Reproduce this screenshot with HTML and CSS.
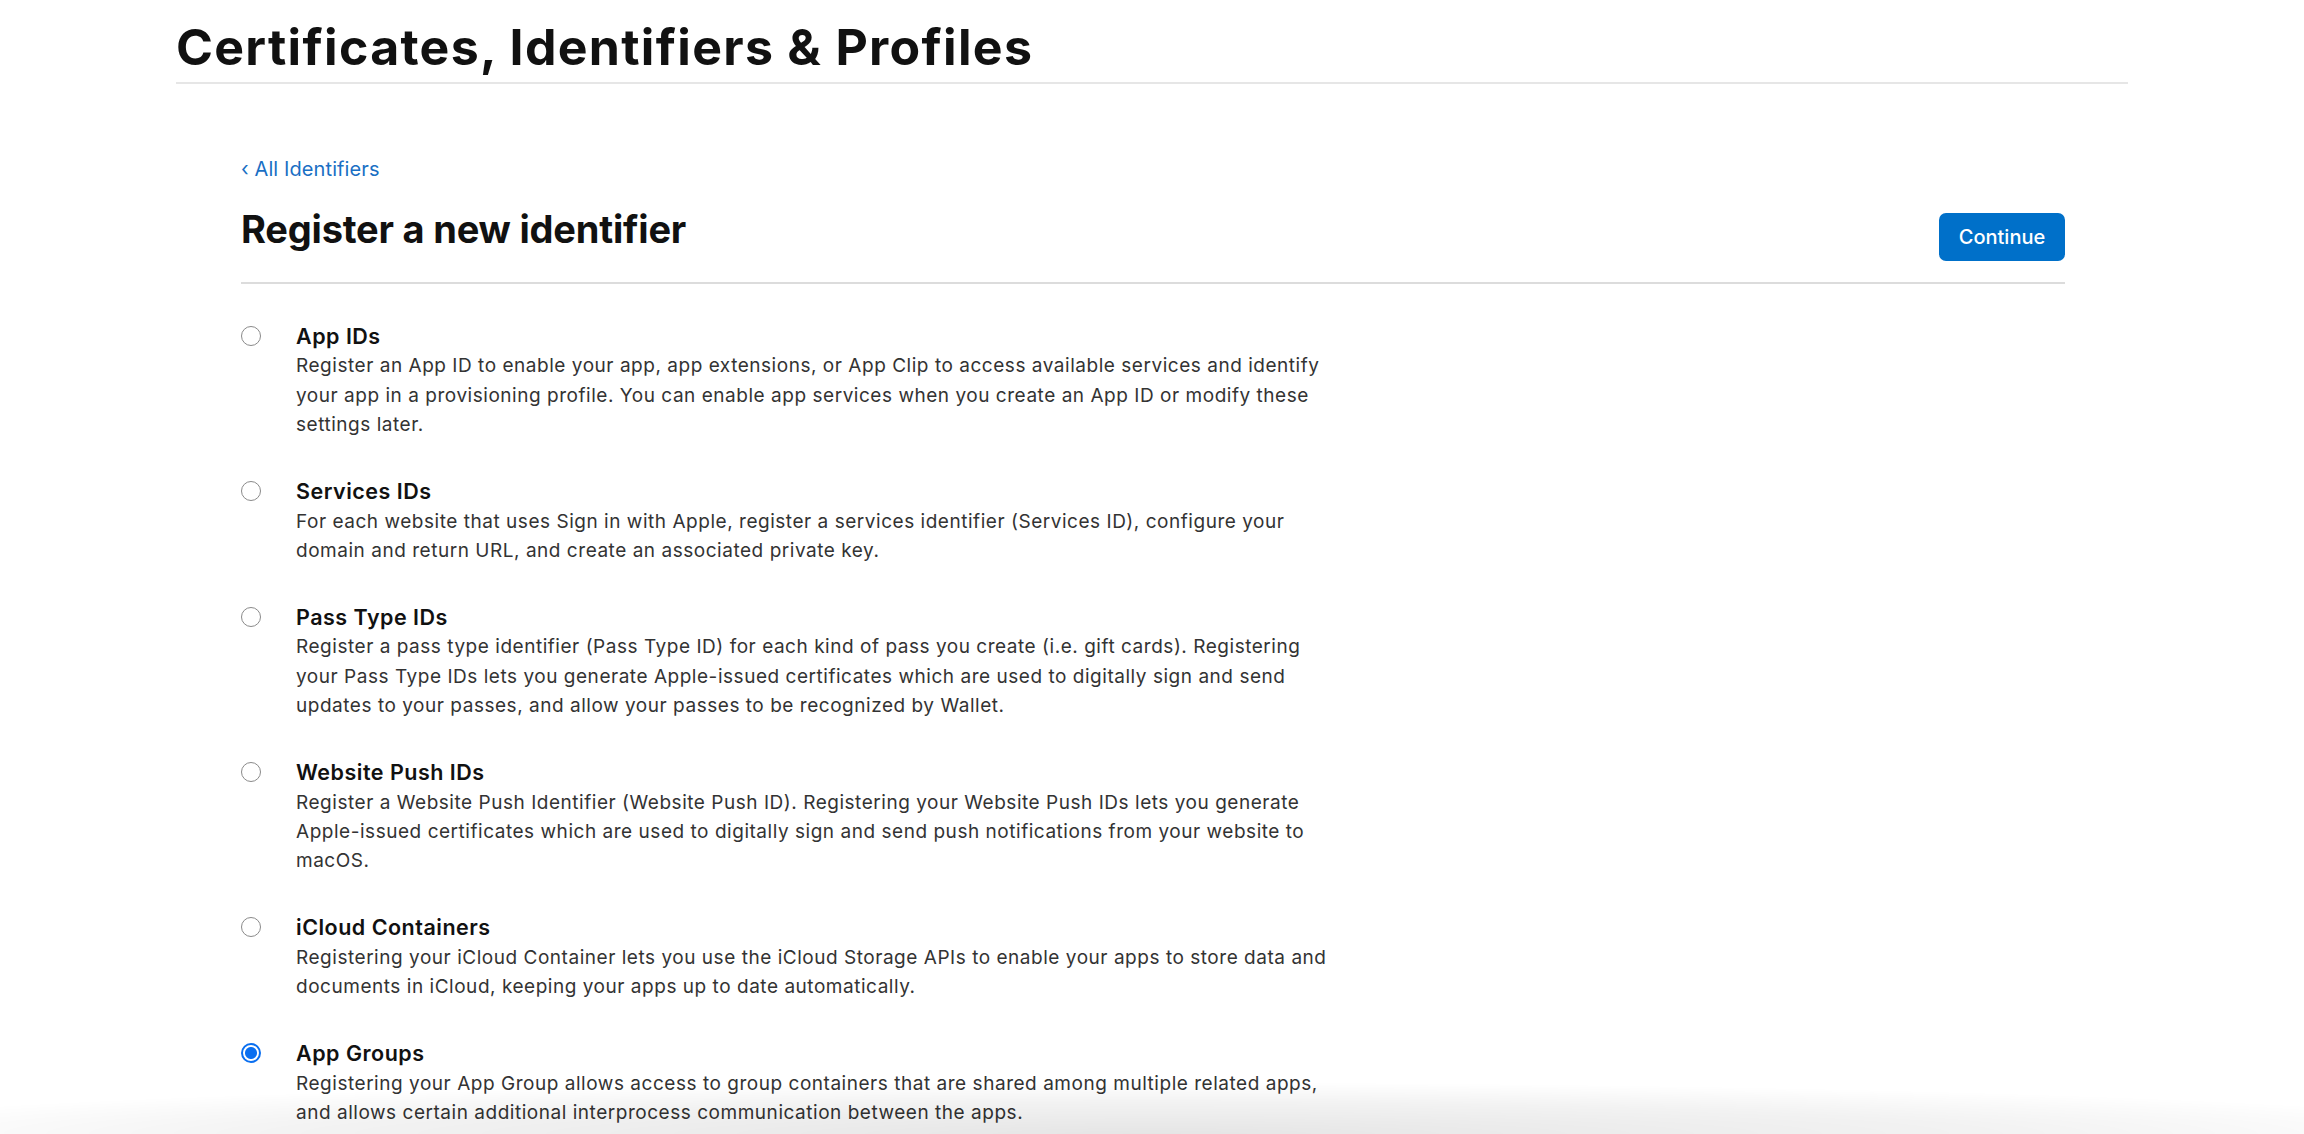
FILE: index.html
```html
<!DOCTYPE html>
<html lang="en">
<head>
<meta charset="utf-8">
<title>Certificates, Identifiers &amp; Profiles</title>
<link rel="stylesheet" href="styles.css">
</head>
<body>
<div class="page">
  <header class="page-header">
    <h1 class="page-title">Certificates, Identifiers &amp; Profiles</h1>
  </header>
  <main class="content">
    <a class="back-link" href="#"><span class="chev">‹</span> All Identifiers</a>
    <div class="toolbar">
      <h2 class="section-title">Register a new identifier</h2>
      <button class="btn-continue" type="button">Continue</button>
    </div>
    <ul class="options">
      <li class="option">
        <span class="radio"></span>
        <div class="option-body">
          <div class="option-title">App IDs</div>
          <p class="option-desc">Register an App ID to enable your app, app extensions, or App Clip to access available services and identify<br>your app in a provisioning profile. You can enable app services when you create an App ID or modify these<br>settings later.</p>
        </div>
      </li>
      <li class="option">
        <span class="radio"></span>
        <div class="option-body">
          <div class="option-title">Services IDs</div>
          <p class="option-desc">For each website that uses Sign in with Apple, register a services identifier (Services ID), configure your<br>domain and return URL, and create an associated private key.</p>
        </div>
      </li>
      <li class="option">
        <span class="radio"></span>
        <div class="option-body">
          <div class="option-title">Pass Type IDs</div>
          <p class="option-desc">Register a pass type identifier (Pass Type ID) for each kind of pass you create (i.e. gift cards). Registering<br>your Pass Type IDs lets you generate Apple-issued certificates which are used to digitally sign and send<br>updates to your passes, and allow your passes to be recognized by Wallet.</p>
        </div>
      </li>
      <li class="option">
        <span class="radio"></span>
        <div class="option-body">
          <div class="option-title">Website Push IDs</div>
          <p class="option-desc">Register a Website Push Identifier (Website Push ID). Registering your Website Push IDs lets you generate<br>Apple-issued certificates which are used to digitally sign and send push notifications from your website to<br>macOS.</p>
        </div>
      </li>
      <li class="option">
        <span class="radio"></span>
        <div class="option-body">
          <div class="option-title">iCloud Containers</div>
          <p class="option-desc">Registering your iCloud Container lets you use the iCloud Storage APIs to enable your apps to store data and<br>documents in iCloud, keeping your apps up to date automatically.</p>
        </div>
      </li>
      <li class="option">
        <span class="radio radio-checked"></span>
        <div class="option-body">
          <div class="option-title">App Groups</div>
          <p class="option-desc">Registering your App Group allows access to group containers that are shared among multiple related apps,<br>and allows certain additional interprocess communication between the apps.</p>
        </div>
      </li>
    </ul>
  </main>
</div>
<div class="bottom-shade"></div>
</body>
</html>
```
FILE: styles.css
```css
html, body {
  margin: 0;
  padding: 0;
  background: #ffffff;
  overflow: hidden;
  height: 100%;
}
body {
  font-family: Inter, "Liberation Sans", sans-serif;
  color: #1d1d1f;
}
.page {
  width: 1952px;
  margin: 0 auto;
}
.page-header {
  padding-top: 19px;
  padding-bottom: 7px;
  border-bottom: 2px solid #e6e6e6;
}
.page-title {
  margin: 0;
  font-size: 50px;
  line-height: 56px;
  font-weight: 700;
  letter-spacing: 1.3px;
  color: #111111;
}
.content {
  padding: 0 63px 0 65px;
}
.back-link {
  display: block;
  margin-top: 73px;
  font-size: 20px;
  line-height: 24px;
  color: #1a6fc4;
  text-decoration: none;
  letter-spacing: 0.1px;
}
.chev {
  font-size: 20px;
}
.toolbar {
  display: flex;
  justify-content: space-between;
  align-items: flex-start;
  margin-top: 26px;
  padding-bottom: 21px;
  border-bottom: 2px solid #dcdcdc;
}
.section-title {
  margin: 0;
  font-size: 38px;
  line-height: 44px;
  font-weight: 700;
  letter-spacing: -0.2px;
  color: #111111;
}
.btn-continue {
  margin-top: 6px;
  width: 126px;
  height: 48px;
  border: none;
  border-radius: 7px;
  background: #0070c9;
  color: #ffffff;
  font-family: Inter, "Liberation Sans", sans-serif;
  font-size: 20px;
  font-weight: 500;
  padding: 0;
}
.options {
  list-style: none;
  margin: 0;
  padding: 38px 0 0 0;
  display: flex;
  flex-direction: column;
  gap: 37.6px;
}
.option {
  display: flex;
  align-items: flex-start;
  gap: 35px;
}
.radio {
  flex: none;
  box-sizing: border-box;
  width: 20px;
  height: 20px;
  margin-top: 4px;
  border-radius: 50%;
  border: 1px solid #8a8a8a;
  background: #ffffff;
}
.radio-checked {
  border: 2px solid #0a6ff0;
  background: radial-gradient(circle, #0a6ff0 0 5.5px, #ffffff 6.5px);
}
.option-title {
  font-size: 21.5px;
  line-height: 29.4px;
  font-weight: 600;
  letter-spacing: 0.5px;
  color: #111111;
}
.option-desc {
  margin: 0;
  font-size: 19px;
  line-height: 29.4px;
  color: #333333;
  white-space: nowrap;
  letter-spacing: 0.53px;
}
.bottom-shade {
  position: fixed;
  left: 0;
  right: 0;
  bottom: 0;
  height: 52px;
  pointer-events: none;
  background: radial-gradient(ellipse 60% 100% at 50% 100%, rgba(0,0,0,0.10), rgba(0,0,0,0.05) 60%, rgba(0,0,0,0) 100%);
}
```
